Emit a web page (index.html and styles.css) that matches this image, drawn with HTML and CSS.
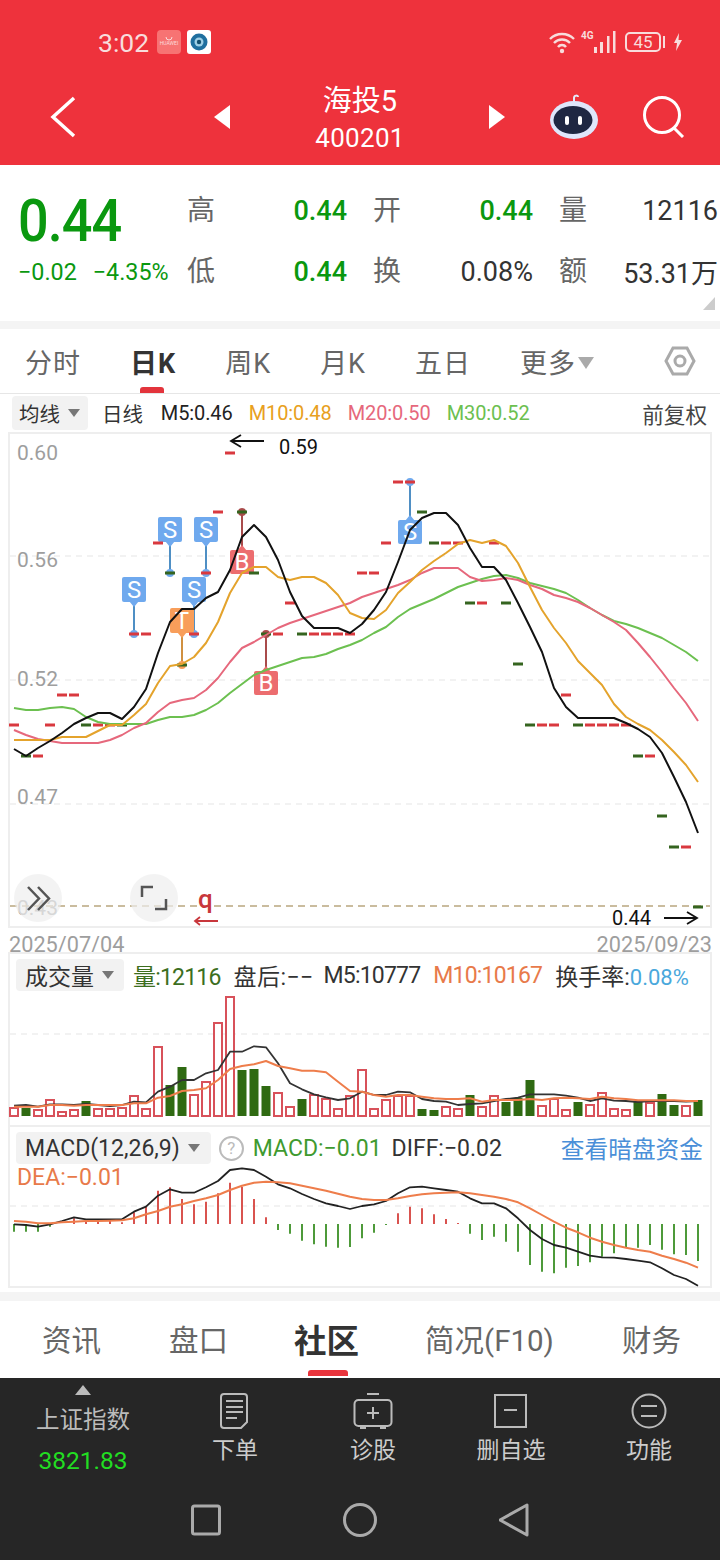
FILE: index.html
```html
<!DOCTYPE html>
<html lang="zh-CN">
<head>
    <meta charset="UTF-8">
    <meta name="viewport" content="width=device-width, initial-scale=1.0">
    <title>海投5 400201</title>
    <link rel="stylesheet" href="styles.css">
</head>
<body>
    <header class="top">
        <div class="status">
            <span class="clock">3:02</span>
            <svg class="app-icon" viewBox="0 0 24 24">
                <rect width="24" height="24" rx="4" fill="#f77373"/>
                <path d="M9 7a3 3 0 0 0 6 0" fill="none" stroke="#fbdcdc" stroke-width="1"/>
                <text class="tiny" x="12" y="15" text-anchor="middle">HUAWEI</text>
            </svg>
            <svg class="app-icon" viewBox="0 0 24 24">
                <rect width="24" height="24" rx="3" fill="#fff"/>
                <circle cx="12" cy="12" r="8.5" fill="#1f6f9f"/>
                <circle cx="12" cy="12" r="4.5" fill="#9fd0e6"/>
                <circle cx="12" cy="12" r="2.2" fill="#14506f"/>
            </svg>
            <div class="status-right">
                <svg class="wifi" viewBox="0 0 28 24">
                    <path d="M2 9a17 17 0 0 1 24 0M6 13a11 11 0 0 1 16 0M10 17a5 5 0 0 1 8 0" fill="none" stroke="#f8dcdc" stroke-width="2.4"/>
                    <circle cx="14" cy="21" r="2.2" fill="#f8dcdc"/>
                </svg>
                <span class="net">4G</span>
                <svg class="signal" viewBox="0 0 24 24">
                    <rect x="1" y="17" width="3" height="6" fill="#f8dcdc"/>
                    <rect x="7" y="12" width="3" height="11" fill="#f8dcdc"/>
                    <rect x="14" y="6" width="2.500" height="17" fill="#f8dcdc"/>
                    <rect x="20" y="1" width="2.500" height="22" fill="#f8dcdc"/>
                </svg>
                <span class="battery">45</span>
                <span class="battery-tip"></span>
                <svg class="bolt" viewBox="0 0 10 18">
                    <path d="M6 0 1 10h3l-1 8 6-11H5.500z" fill="#f8dcdc"/>
                </svg>
            </div>
        </div>
        <nav class="nav">
            <div class="nav-left">
                <svg class="back" viewBox="0 0 26 42">
                    <path d="M24 2 3 21l21 19" fill="none" stroke="#fff" stroke-width="3.500"/>
                </svg>
                <span class="tri-left"></span>
            </div>
            <div class="title">
                <div class="stock-name">海投5</div>
                <div class="stock-code">400201</div>
            </div>
            <div class="nav-right">
                <span class="tri-right"></span>
                <svg class="robot" viewBox="0 0 48 46">
                    <path d="M24 8V4c0-3 4-3 4-1" fill="none" stroke="#e4e9fa" stroke-width="2"/>
                    <ellipse cx="24" cy="26" rx="24" ry="19" fill="#dfe6fb"/>
                    <ellipse cx="23" cy="26" rx="19.500" ry="14" fill="#1f2742"/>
                    <rect x="15" y="22" width="4" height="9" rx="2" fill="#fff"/>
                    <rect x="28" y="22" width="4" height="9" rx="2" fill="#fff"/>
                </svg>
                <svg class="search" viewBox="0 0 42 42">
                    <circle cx="19" cy="19" r="17.500" fill="none" stroke="#fff" stroke-width="3"/>
                    <path d="M31 32l9 9" stroke="#fff" stroke-width="3"/>
                </svg>
            </div>
        </nav>
    </header>

    <section class="quote">
        <div class="price">
            <div class="price-now">0.44</div>
            <div class="price-change"><span>−0.02</span><span>−4.35%</span></div>
        </div>
        <div class="stats">
            <div class="stat"><span class="stat-label">高</span><span class="stat-value down">0.44</span></div>
            <div class="stat"><span class="stat-label">开</span><span class="stat-value down">0.44</span></div>
            <div class="stat"><span class="stat-label">量</span><span class="stat-value">12116</span></div>
            <div class="stat"><span class="stat-label">低</span><span class="stat-value down">0.44</span></div>
            <div class="stat"><span class="stat-label">换</span><span class="stat-value">0.08%</span></div>
            <div class="stat"><span class="stat-label">额</span><span class="stat-value">53.31万</span></div>
        </div>
        <span class="corner"></span>
    </section>

    <div class="band"></div>

    <div class="period-tabs">
        <span class="period">分时</span>
        <span class="period active">日K</span>
        <span class="period">周K</span>
        <span class="period">月K</span>
        <span class="period">五日</span>
        <span class="period">更多<i class="caret-big"></i></span>
        <svg class="hex" viewBox="0 0 32 30">
            <path d="M9 2h14l7 13-7 13H9L2 15z" fill="none" stroke="#aaa" stroke-width="3"/>
            <circle cx="16" cy="15" r="5" fill="none" stroke="#aaa" stroke-width="3"/>
        </svg>
    </div>

    <div class="legend">
        <span class="pill pill-small">均线<i class="caret"></i></span>
        <span class="legend-item first">日线</span>
        <span class="legend-item m5">M5:0.46</span>
        <span class="legend-item m10">M10:0.48</span>
        <span class="legend-item m20">M20:0.50</span>
        <span class="legend-item m30">M30:0.52</span>
        <span class="legend-end">前复权</span>
    </div>

    <div class="panel panel-main">
        <svg id="kline" class="chart" width="700" height="492" viewBox="10 434 700 492">
            <path class="grid" d="M10 556H710M10 680H710M10 804H710"/>
            <text class="axis" x="17" y="460">0.60</text>
            <text class="axis" x="17" y="567">0.56</text>
            <text class="axis" x="17" y="686">0.52</text>
            <text class="axis" x="17" y="804">0.47</text>
            <text class="axis" x="17" y="915">0.43</text>
            <path class="last-line" d="M10 906H710"/>

            <g class="flag flag-s">
                <path d="M134 602V634M170 541V573M206 541V573M194 602V634"/>
                <circle cx="134" cy="634" r="4"/><circle cx="170" cy="573" r="4"/>
                <circle cx="206" cy="573" r="4"/><circle cx="194" cy="634" r="4"/>
                <polygon points="129,601 139,601 134,607"/><polygon points="165,541 175,541 170,547"/>
                <polygon points="201,541 211,541 206,547"/><polygon points="189,601 199,601 194,607"/>
                <rect x="122" y="577" width="24" height="25" rx="2"/>
                <rect x="158" y="517" width="24" height="25" rx="2"/>
                <rect x="194" y="517" width="24" height="25" rx="2"/>
                <rect x="182" y="577" width="24" height="25" rx="2"/>
                <text x="134" y="598">S</text><text x="170" y="538">S</text>
                <text x="206" y="538">S</text><text x="194" y="598">S</text>
            </g>
            <g class="flag flag-t">
                <path d="M182 633V665"/>
                <circle cx="182" cy="665" r="4"/>
                <polygon points="177,632 187,632 182,638"/>
                <rect x="170" y="608" width="24" height="25" rx="2"/>
                <text x="182" y="629">T</text>
            </g>
            <g class="flag flag-b">
                <path d="M242 512V550M266 634V671"/>
                <circle cx="242" cy="512" r="4"/><circle cx="266" cy="634" r="4"/>
                <polygon class="notch" points="237,551 247,551 242,545"/><polygon class="notch" points="261,672 271,672 266,666"/>
                <rect x="230" y="550" width="24" height="24" rx="2"/>
                <rect x="254" y="671" width="24" height="24" rx="2"/>
                <text x="242" y="570">B</text><text x="266" y="691">B</text>
            </g>
            <g class="flag flag-s">
                <path d="M410 482V520"/>
                <circle cx="410" cy="482" r="4"/>
                <polygon points="405,521 415,521 410,515"/>
                <rect x="398" y="520" width="24" height="24" rx="2"/>
                <text x="410" y="540">S</text>
            </g>

            <g id="candles"></g>
            <g id="maLines"></g>

            <path class="note-arrow" d="M264 441H231M241 435l-10 6 10 6"/>
            <text class="note" x="279" y="454">0.59</text>
            <text class="note" x="612" y="925">0.44</text>
            <path class="note-arrow" d="M664 918H697M687 912l10 6-10 6"/>
            <text class="mark-q" x="198" y="908">q</text>
            <path class="mark-arrow" d="M218 921H195M200 917l-5 4 5 4"/>

            <circle class="round-btn" cx="38" cy="898" r="24"/>
            <circle class="round-btn" cx="154" cy="898" r="24"/>
            <path class="round-icon" d="M28 887l11 11.500-11 11.500M38 887l11 11.500-11 11.500"/>
            <path class="round-icon" d="M142 897V887H153M166 899V909H155"/>
        </svg>
    </div>

    <div class="dates"><span>2025/07/04</span><span>2025/09/23</span></div>

    <div class="panel panel-volume">
        <svg id="volume" class="chart chart-over" width="700" height="171" viewBox="10 954 700 171">
            <path class="grid" d="M10 1034H710"/>
        </svg>
        <div class="panel-head head-volume">
            <span class="pill">成交量<i class="caret"></i></span>
            <span class="head-text tight vol-green">量:12116</span>
            <span class="head-text after-volume">盘后:−−</span>
            <span class="head-text tight m5-volume">M5:10777</span>
            <span class="head-text tight orange">M10:10167</span>
            <span class="head-text">换手率:<b class="blue">0.08%</b></span>
        </div>
    </div>

    <div class="panel panel-macd">
        <svg id="macd" class="chart chart-over" width="700" height="159" viewBox="10 1127 700 159">
            <path class="grid" d="M10 1206H710"/>
        </svg>
        <div class="panel-head">
            <span class="pill">MACD(12,26,9)<i class="caret"></i></span>
            <span class="help">?</span>
            <span class="head-text macd-green">MACD:−0.01</span>
            <span class="head-text">DIFF:−0.02</span>
            <span class="dark-link">查看暗盘资金</span>
        </div>
        <div class="dea orange">DEA:−0.01</div>
    </div>

    <div class="spacer"></div>
    <div class="band band-low"></div>

    <div class="info-tabs">
        <span class="info-tab">资讯</span>
        <span class="info-tab">盘口</span>
        <span class="info-tab active">社区</span>
        <span class="info-tab">简况(F10)</span>
        <span class="info-tab">财务</span>
    </div>

    <footer class="bottom">
        <div class="actions">
            <div class="index">
                <span class="tri-up"></span>
                <div class="index-name">上证指数</div>
                <div class="index-value">3821.83</div>
            </div>
            <div class="action">
                <svg class="action-icon" viewBox="0 0 40 38">
                    <path d="M9 2h20a3 3 0 0 1 3 3v25l-6 6H9a3 3 0 0 1-3-3V5a3 3 0 0 1 3-3z" fill="none"/>
                    <path d="M11 9h17M11 15h17M11 20h17M11 26h11" fill="none"/>
                </svg>
                <span>下单</span>
            </div>
            <div class="action">
                <svg class="action-icon" viewBox="0 0 40 38">
                    <path d="M14 2h12"/>
                    <rect x="1.500" y="8" width="37" height="26" rx="4" fill="none"/>
                    <path d="M20 15v12M14 21h12M7 36h6M27 36h6"/>
                </svg>
                <span>诊股</span>
            </div>
            <div class="action">
                <svg class="action-icon" viewBox="0 0 40 38">
                    <rect x="4" y="3" width="31" height="32" fill="none"/>
                    <path d="M13 18h13"/>
                </svg>
                <span>删自选</span>
            </div>
            <div class="action">
                <svg class="action-icon" viewBox="0 0 40 38">
                    <circle cx="20" cy="19" r="16.500" fill="none"/>
                    <path d="M12 14h16M12 24h16"/>
                </svg>
                <span>功能</span>
            </div>
        </div>
        <div class="sys-nav">
            <svg width="30" height="32" viewBox="0 0 30 32"><rect x="1.500" y="2" width="27" height="28" rx="2"/></svg>
            <svg width="34" height="34" viewBox="0 0 34 34"><circle cx="17" cy="17" r="15.500"/></svg>
            <svg width="30" height="34" viewBox="0 0 30 34"><path d="M28 2v30L1 17z"/></svg>
        </div>
    </footer>

    <script src="chart.js"></script>
</body>
</html>
```

FILE: styles.css
```css
body {
    margin: 0;
    width: 720px;
    background: #fff;
    font-family: Roboto, "Noto Sans CJK SC", sans-serif;
    color: #333;
}

/* red header */
.top {
    height: 165px;
    background: #ee323c;
    color: #fff;
}
.status {
    height: 84px;
    display: flex;
    align-items: center;
    padding-left: 98px;
    padding-right: 37px;
    color: #f8dcdc;
}
.clock {
    font-size: 26.500px;
    margin-right: 8px;
}
.app-icon {
    width: 24px;
    height: 24px;
    margin-right: 6px;
}
.tiny {
    font-size: 5px;
    fill: #fbdcdc;
}
.status-right {
    margin-left: auto;
    display: flex;
    align-items: center;
}
.wifi {
    width: 28px;
    height: 24px;
}
.net {
    position: relative;
    top: -7px;
    width: 12px;
    margin-left: 5px;
    font-size: 10px;
    font-weight: 700;
}
.signal {
    width: 24px;
    height: 24px;
    margin-right: 8px;
}
.battery {
    width: 36px;
    height: 20px;
    box-sizing: border-box;
    border: 2px solid #f8dcdc;
    border-radius: 5px;
    font-size: 17px;
    line-height: 17px;
    text-align: center;
}
.battery-tip {
    width: 2px;
    height: 12px;
    background: #f8dcdc;
    margin-left: 2px;
    margin-right: 8px;
}
.bolt {
    width: 10px;
    height: 18px;
}
.nav {
    height: 81px;
    display: flex;
    align-items: flex-start;
}
.nav-left, .nav-right {
    width: 270px;
    display: flex;
    align-items: center;
    height: 66px;
}
.nav-left {
    justify-content: space-between;
    padding: 0 40px 0 50px;
    box-sizing: border-box;
}
.nav-right {
    padding-left: 39px;
    box-sizing: border-box;
}
.back {
    width: 26px;
    height: 42px;
}
.tri-left, .tri-right {
    width: 0;
    height: 0;
    border-top: 12px solid transparent;
    border-bottom: 12px solid transparent;
}
.tri-left {
    border-right: 16px solid #fff;
}
.tri-right {
    border-left: 16px solid #fff;
}
.robot {
    width: 48px;
    height: 46px;
    margin-left: 45px;
}
.search {
    width: 42px;
    height: 42px;
    margin-left: 45px;
}
.title {
    width: 180px;
    text-align: center;
}
.stock-name {
    font-size: 29px;
    line-height: 34px;
}
.stock-code {
    font-size: 26px;
    line-height: 40px;
    letter-spacing: 0.3px;
}

/* price block */
.quote {
    position: relative;
    height: 156px;
    display: flex;
}
.price {
    width: 187px;
    flex: none;
    box-sizing: border-box;
    padding: 25px 0 0 18px;
    color: #0a980f;
}
.price-now {
    font-size: 54px;
    line-height: 62px;
    font-weight: 500;
    letter-spacing: -1px;
    transform: scaleY(1.1);
}
.price-change {
    font-size: 23.300px;
    line-height: 40px;
    display: flex;
    gap: 16px;
}
.stats {
    flex: 1;
    display: grid;
    grid-template-columns: 160px 160px 161px;
    grid-auto-rows: 61px;
    column-gap: 26px;
    margin-top: 15px;
}
.stat {
    display: flex;
    align-items: center;
    justify-content: space-between;
}
.stat-label {
    position: relative;
    top: -3px;
    font-size: 28px;
    color: #666;
}
.stat-value {
    font-size: 27px;
    color: #333;
}
.stat:nth-child(3n) .stat-value {
    padding-right: 2px;
}
.stat-value.down {
    font-weight: 500;
    color: #0a980f;
}
.corner {
    position: absolute;
    right: 5px;
    bottom: 11px;
    width: 0;
    height: 0;
    border-left: 12px solid transparent;
    border-bottom: 13px solid #ccc;
}
.band {
    height: 8px;
    background: #f4f4f4;
}

/* period tabs */
.period-tabs {
    height: 64px;
    display: flex;
    align-items: center;
    gap: 49px;
    padding-left: 25px;
    border-bottom: 1px solid #e6e6e6;
}
.period {
    position: relative;
    font-size: 27px;
    letter-spacing: 1px;
    color: #666;
    white-space: nowrap;
}
.period.active {
    color: #333;
    font-weight: 700;
}
.period.active::after {
    content: "";
    position: absolute;
    left: 10px;
    bottom: -12px;
    width: 24px;
    height: 6px;
    border-radius: 3px 3px 0 0;
    background: #e3343c;
}
.caret-big {
    display: inline-block;
    margin-left: 2px;
    vertical-align: 4px;
    border-left: 8px solid transparent;
    border-right: 8px solid transparent;
    border-top: 12px solid #aaa;
}
.hex {
    width: 32px;
    height: 30px;
    margin-left: auto;
    margin-right: 24px;
}

/* legend row */
.legend {
    height: 38px;
    display: flex;
    align-items: center;
    font-size: 20px;
    padding: 0 13px 0 12px;
    white-space: nowrap;
}
.pill {
    display: flex;
    align-items: center;
    height: 32px;
    padding: 0 11px 0 9px;
    border-radius: 4px;
    background: #f2f2f2;
    font-size: 23px;
    color: #333;
}
.pill-small {
    height: 34px;
    padding: 0 8px 0 7px;
    font-size: 20.500px;
}
.caret {
    margin-left: 8px;
    border-left: 6px solid transparent;
    border-right: 6px solid transparent;
    border-top: 8px solid #777;
}
.legend-item {
    margin-left: 16px;
    letter-spacing: -0.1px;
}
.legend-item.first {
    margin-left: 14px;
    font-size: 20.500px;
}
.legend-item.m5 {
    margin-left: 18px;
}
.m5 { color: #222; }
.m10 { color: #e8a020; }
.m20 { color: #e6687c; }
.m30 { color: #6cc050; }
.legend-end {
    margin-left: auto;
    font-size: 21.600px;
    color: #444;
}

/* chart panels */
.panel {
    position: relative;
    width: 704px;
    margin-left: 8px;
    box-sizing: border-box;
    border: 2px solid #eee;
}
.panel-main {
    height: 496px;
}
.panel-volume {
    height: 173px;
    border-bottom: 0;
}
.panel-macd {
    height: 163px;
}
.chart {
    display: block;
    overflow: visible;
}
.chart-over {
    position: absolute;
    left: 0;
    top: 0;
}
.grid {
    fill: none;
    stroke: #eee;
    stroke-width: 1.500;
    stroke-dasharray: 6 5;
}
.last-line {
    fill: none;
    stroke: #b9a77f;
    stroke-width: 1.500;
    stroke-dasharray: 7 5;
}
.axis {
    font-size: 21px;
    fill: #9e9e9e;
}
.note {
    font-size: 20px;
    fill: #111;
}
.note-arrow {
    fill: none;
    stroke: #111;
    stroke-width: 1.800;
}
.mark-q {
    font-size: 26px;
    font-weight: 500;
    fill: #c8373c;
}
.mark-arrow {
    fill: none;
    stroke: #c8373c;
    stroke-width: 1.800;
}
.flag text {
    font-size: 24px;
    fill: #fff;
    text-anchor: middle;
}
.flag path {
    fill: none;
    stroke-width: 2;
}
.flag-s rect, .flag-s circle, .flag-s polygon { fill: #6fa9ee; }
.flag-s path { stroke: #4f8fc4; }
.flag-t rect, .flag-t circle, .flag-t polygon { fill: #f89e5a; }
.flag-t path { stroke: #d09040; }
.flag-b rect, .flag-b polygon { fill: #ec6d6f; }
.flag-b circle { fill: #a94b4b; }
.flag-b path { stroke: #a94b4b; }
.round-btn {
    fill: #eee;
    fill-opacity: 0.7;
}
.round-icon {
    fill: none;
    stroke: #555;
    stroke-width: 2.500;
}
.dates {
    height: 24px;
    display: flex;
    justify-content: space-between;
    box-sizing: border-box;
    width: 712px;
    padding-left: 9px;
    font-size: 21.700px;
    line-height: 34px;
    color: #9e9e9e;
}
.panel-head {
    position: relative;
    display: flex;
    align-items: center;
    height: 32px;
    margin-top: 5px;
    padding-left: 6px;
    white-space: nowrap;
}
.head-text {
    font-size: 23px;
    margin-left: 10px;
    color: #333;
}
.head-volume .pill {
    padding-right: 10px;
}
.head-volume .head-text {
    margin-left: 13px;
}
.head-volume .head-text.vol-green {
    margin-left: 9px;
}
.head-volume .head-text.m5-volume {
    margin-left: 10px;
}
.head-text.tight {
    letter-spacing: -0.8px;
}
.after-volume {
    letter-spacing: 0.4px;
}
.head-text b {
    font-size: 22px;
    font-weight: 400;
}
.vol-green { color: #3c6e1e; }
.macd-green { color: #3f9a2f; margin-left: 9px; }
.orange { color: #e87a4a; }
.blue { color: #4aa8dc; }
.help {
    width: 21px;
    height: 21px;
    margin-left: 8px;
    border: 2px solid #bbb;
    border-radius: 50%;
    font-size: 17px;
    line-height: 21px;
    text-align: center;
    color: #bbb;
}
.dark-link {
    margin-left: auto;
    margin-right: 7px;
    font-size: 23.700px;
    color: #4a8fd8;
}
.dea {
    position: relative;
    font-size: 23px;
    line-height: 28px;
    margin-left: 7px;
}
.spacer {
    height: 4px;
}
.band-low {
    height: 9px;
}

/* lower tabs */
.info-tabs {
    height: 74px;
    padding-bottom: 3px;
    display: flex;
    align-items: center;
    gap: 68px;
    padding-left: 42px;
}
.info-tab {
    position: relative;
    font-size: 29.500px;
    color: #666;
    white-space: nowrap;
}
.info-tab.active {
    margin: 0 -2px;
    font-size: 32.500px;
    font-weight: 700;
    color: #333;
}
.info-tab.active::after {
    content: "";
    position: absolute;
    left: 14px;
    bottom: -14px;
    width: 40px;
    height: 6px;
    border-radius: 3px 3px 0 0;
    background: #e9343c;
}

/* dark bottom bar */
.bottom {
    height: 182px;
    background: #262626;
    color: #ccc;
}
.actions {
    height: 116px;
    display: grid;
    grid-template-columns: 166px repeat(4, 138px);
}
.index {
    position: relative;
    text-align: center;
    padding-top: 28px;
}
.tri-up {
    position: absolute;
    left: 75px;
    top: 7px;
    border-left: 8px solid transparent;
    border-right: 8px solid transparent;
    border-bottom: 10px solid #bbb;
}
.index-name {
    font-size: 23.500px;
    line-height: 28px;
    color: #bbb;
}
.index-value {
    font-size: 24.500px;
    line-height: 28px;
    margin-top: 13px;
    color: #22dd22;
}
.action {
    display: flex;
    flex-direction: column;
    align-items: center;
    font-size: 23px;
    line-height: 30px;
    padding-top: 14px;
}
.action-icon {
    width: 40px;
    height: 38px;
    margin-bottom: 6px;
    stroke: #bbb;
    stroke-width: 2;
}
.sys-nav {
    height: 52px;
    display: flex;
    align-items: center;
    justify-content: center;
    gap: 122px;
}
.sys-nav svg {
    fill: none;
    stroke: #aaa;
    stroke-width: 3;
    stroke-linejoin: round;
}
```

FILE: chart.js
```js
// every series has one value per trading day, 58 days, 12px apart
const xAt = i => 14 + 12 * i;
const NS = 'http://www.w3.org/2000/svg';

function add(parent, tag, attrs) {
    const node = document.createElementNS(NS, tag);
    Object.keys(attrs).forEach(key => node.setAttribute(key, attrs[key]));
    parent.appendChild(node);
    return node;
}

function line(parent, values, color, width) {
    const points = values.map((y, i) => xAt(i) + ',' + y.toFixed(1)).join(' ');
    add(parent, 'polyline', {
        points: points, fill: 'none', stroke: color,
        'stroke-width': width, 'stroke-linejoin': 'round'
    });
}

// negative = falling day (green)
const candles = [725,-756,756,725,695,695,-725,725,725,-725,634,634,543,-573,-665,634,573,512,453,-512,
    -573,-634,634,603,-634,634,634,634,634,573,573,543,482,482,-512,-543,543,543,-603,603,
    543,-603,-664,-725,725,725,695,-725,725,725,725,725,-756,756,-816,-847,847,-907];

const ma5 = [749,756,748,741,733,724,718,713,713,719,707,689,653,622,609,609,598,592,570,537,
    525,537,560,592,616,628,628,628,633,624,610,592,562,530,518,513,513,525,548,567,
    567,580,603,627,652,688,707,718,718,718,718,723,729,737,753,777,802,833];
const ma10 = [740,740,740,740,737,737,737,731,725,725,715,704,683,666,664,657,643,622,593,573,
    567,567,577,580,577,577,583,595,613,618,619,610,593,582,570,561,553,544,540,543,
    540,546,563,587,610,628,643,661,673,685,704,717,724,730,740,752,765,782];
const ma20 = [730,735,739,741,743,743,743,743,740,735,728,723,712,703,700,698,690,678,662,648,
    642,635,628,623,619,615,611,607,603,597,593,589,585,580,573,568,568,568,577,581,
    580,578,580,585,589,595,598,602,608,615,622,630,643,657,672,688,703,721];
const ma30 = [708,710,710,708,707,709,717,722,724,724,724,724,720,717,717,715,710,703,693,684,
    675,670,666,662,658,657,654,649,645,640,633,627,617,609,604,599,593,587,583,579,
    576,575,578,583,586,589,593,600,608,615,621,624,628,633,638,645,652,661];

const candleGroup = document.getElementById('candles');
candles.forEach((y, i) => {
    add(candleGroup, 'rect', {
        x: xAt(i) - 5, y: Math.abs(y) - 1.5, width: 10, height: 3,
        fill: y > 0 ? '#d9393f' : '#35641f'
    });
});

const maGroup = document.getElementById('maLines');
line(maGroup, ma30, '#6cc050', 2);
line(maGroup, ma20, '#e6687c', 2);
line(maGroup, ma10, '#e4a32c', 2);
line(maGroup, ma5, '#111', 2);

// volume pane: bar heights in px, negative = falling day
const volBars = [9,-8,7,17,5,7,-15,8,8,9,21,8,70,-31,-49,22,35,94,120,-46,
    -47,-30,24,10,-17,22,18,8,21,47,8,17,21,21,-7,-6,10,8,-21,10,
    21,-14,-18,-36,11,18,7,-14,12,24,8,7,-14,14,-22,-11,11,-16];
const volM5 = [452,450,455,448,448,450,447,450,453,450,440,442,410,395,375,375,355,345,290,290,
    274,277,325,385,403,418,427,435,430,410,420,420,410,412,432,438,440,450,447,445,
    438,432,428,418,418,418,422,428,438,430,437,438,441,438,438,438,440,438].map(v => 955 + v / 3);
const volM10 = [455,455,455,450,450,452,450,450,450,450,445,445,428,423,408,405,400,375,342,333,
    328,318,333,340,347,347,352,380,408,410,420,425,420,420,425,430,432,432,430,440,
    435,435,435,432,435,430,428,430,432,425,430,432,436,436,436,436,438,438].map(v => 955 + v / 3);

const volume = document.getElementById('volume');
const volBase = 1116;
volBars.forEach((h, i) => {
    if (h > 0) {
        add(volume, 'rect', {
            x: xAt(i) - 4, y: volBase - h + 1, width: 8, height: h - 1,
            fill: '#fff', stroke: '#d8515a', 'stroke-width': 2
        });
    } else {
        add(volume, 'rect', {
            x: xAt(i) - 4.5, y: volBase + h, width: 9, height: -h,
            fill: '#2f6a12'
        });
    }
});
line(volume, volM5, '#333', 1.8);
line(volume, volM10, '#ee7d4b', 2);

// macd pane: stick ends are drawn from the zero line
const macdSticks = [320,320,320,305,297,280,288,290,288,292,262,245,197,187,222,238,230,205,173,185,
    222,277,315,326,347,358,365,368,366,340,323,300,265,245,250,268,282,294,326,345,
    335,350,380,420,440,445,428,423,412,395,385,368,368,360,374,388,390,408].map(v => 1125 + v / 3);
const diff = [298,300,305,298,288,277,283,283,283,283,260,245,212,193,203,203,187,168,135,130,
    135,155,178,190,207,222,235,243,252,243,238,228,205,187,185,190,195,200,220,235,
    235,250,280,315,342,360,368,380,392,397,398,402,407,412,430,450,462,482].map(v => 1125 + v / 3);
const dea = [288,290,295,295,292,290,288,288,287,286,280,268,258,245,238,228,220,210,195,182,
    173,170,172,175,182,190,197,206,215,222,225,225,220,213,208,205,203,202,205,210,
    215,222,232,250,270,290,308,322,338,350,360,368,375,380,392,402,413,428].map(v => 1125 + v / 3);

const macd = document.getElementById('macd');
const zero = 1224;
macdSticks.forEach((y, i) => {
    add(macd, 'line', {
        x1: xAt(i), x2: xAt(i), y1: zero, y2: y,
        stroke: y < zero ? '#d9534f' : '#4e9a3a', 'stroke-width': 2
    });
});
line(macd, diff, '#222', 1.8);
line(macd, dea, '#ee7d4b', 2);
```
